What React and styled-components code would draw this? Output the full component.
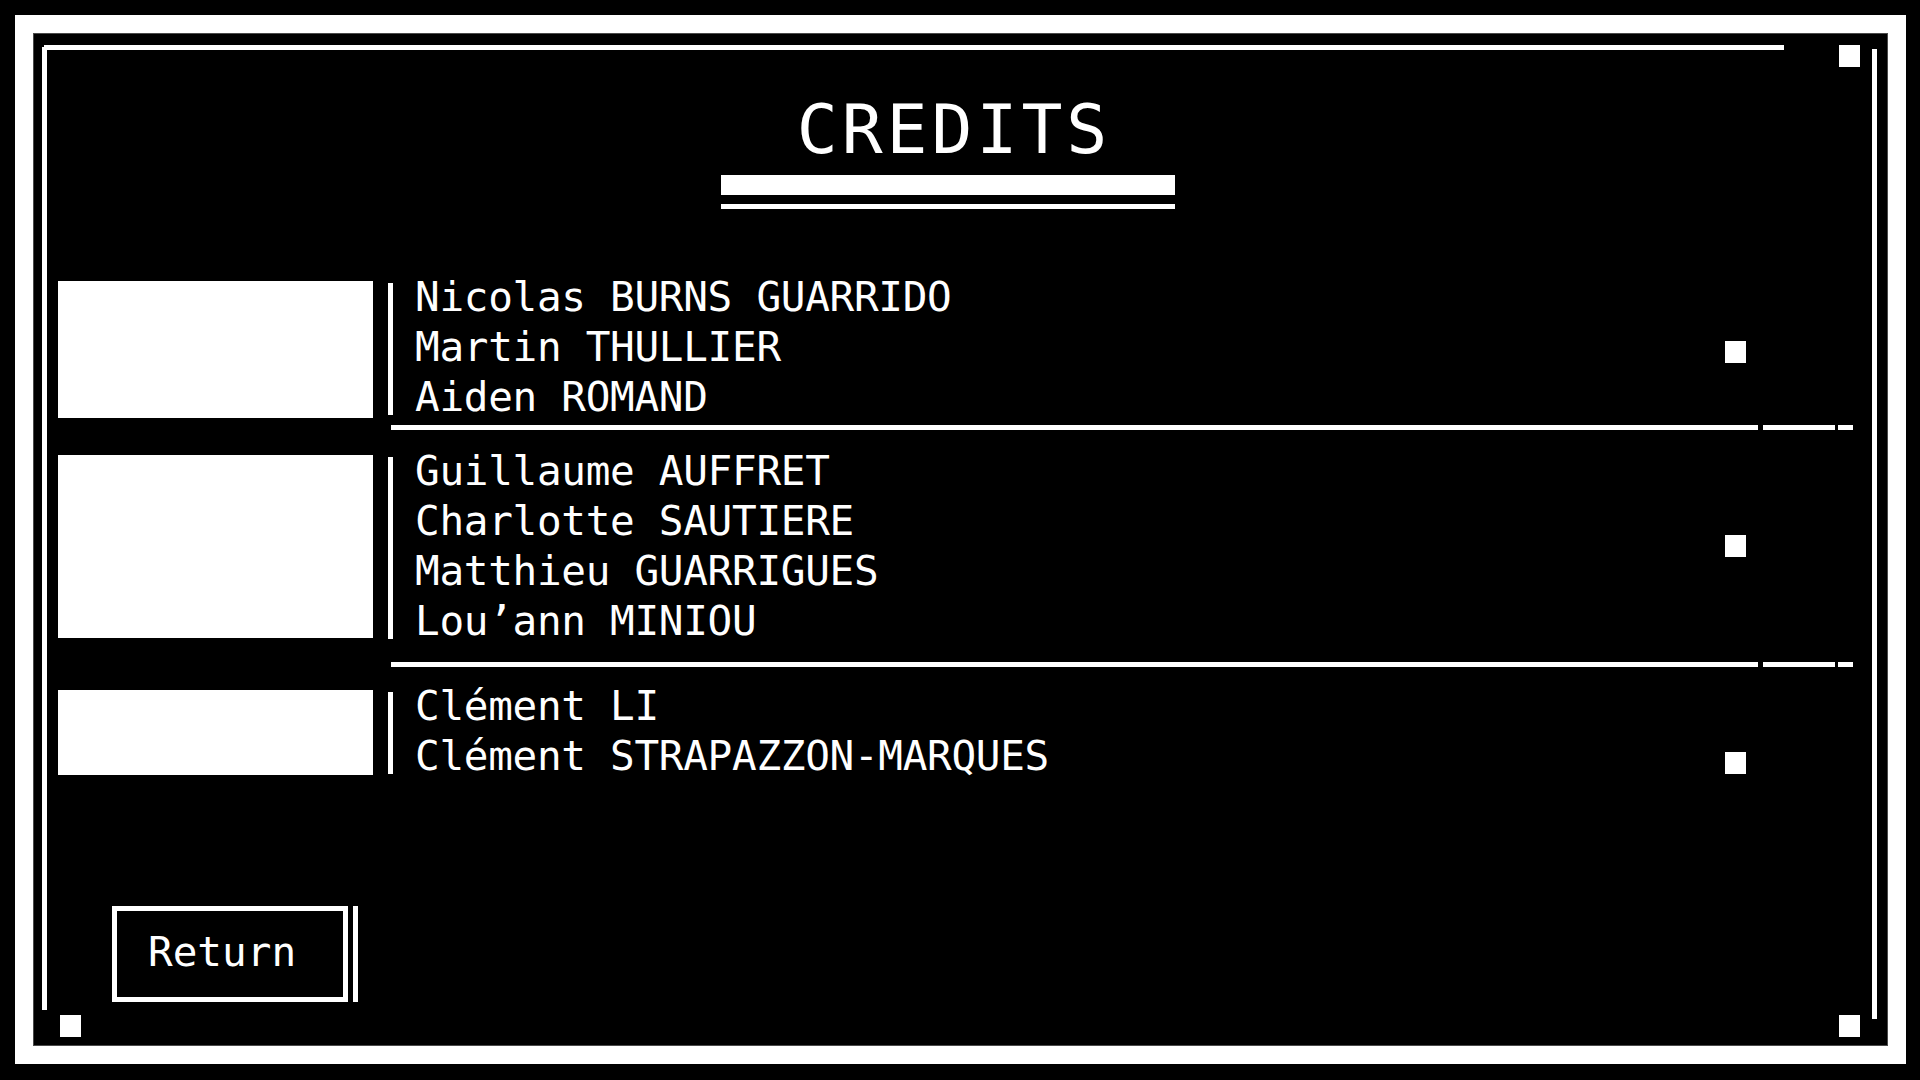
import React from "react";
import styled, { createGlobalStyle } from "styled-components";

const credits = [
  {
    block: 137,
    marker: 60,
    pad: "0 0 7px",
    names: ["Nicolas BURNS GUARRIDO", "Martin THULLIER", "Aiden ROMAND"],
  },
  {
    block: 183,
    marker: 80,
    pad: "25px 0 23px",
    names: [
      "Guillaume AUFFRET",
      "Charlotte SAUTIERE",
      "Matthieu GUARRIGUES",
      "Lou’ann MINIOU",
    ],
  },
  {
    block: 85,
    marker: 62,
    pad: "23px 0 0",
    names: ["Clément LI", "Clément STRAPAZZON-MARQUES"],
  },
];

const App = () => {
  return (
    <Page>
      <GlobalStyle />
      <Frame>
        <Screen>
          <TopLine />
          <CornerSquare $row={1} $side="end" />
          <LeftLine />
          <RightLine />

          <Content>
            <TitleBlock>
              <Title>CREDITS</Title>
              <ThickBar />
              <ThinBar />
            </TitleBlock>

            <CreditList>
              {credits.map((group, i) => (
                <React.Fragment key={i}>
                  <CreditRow $pad={group.pad}>
                    <Picture $h={group.block} />
                    <Names>
                      {group.names.map((n) => (
                        <Name key={n}>{n}</Name>
                      ))}
                    </Names>
                    <Marker $top={group.marker} />
                  </CreditRow>
                  {i < credits.length - 1 && (
                    <Divider>
                      <Segment $w={1367} />
                      <Segment $w={72} $gap={5} />
                      <Segment $w={15} $gap={3} />
                    </Divider>
                  )}
                </React.Fragment>
              ))}
            </CreditList>

            <ReturnWrap>
              <ReturnButton type="button">Return</ReturnButton>
              <ButtonRail />
            </ReturnWrap>
          </Content>

          <CornerSquare $row={3} $side="start" />
          <CornerSquare $row={3} $side="end" />
        </Screen>
      </Frame>
    </Page>
  );
};

export default App;

const GlobalStyle = createGlobalStyle`
  html, body {
    margin: 0;
    padding: 0;
    background: #000;
  }
  * {
    box-sizing: border-box;
  }
`;

// page + white frame
const Page = styled.div`
  width: 1920px;
  height: 1080px;
  padding: 15px 14px 16px 15px;
  background: #000;
  font-family: "DejaVu Sans Mono", "Liberation Mono", monospace;
  color: #fff;
`;

const Frame = styled.div`
  height: 100%;
  border: 18px solid #fff;
`;

const Screen = styled.div`
  height: 100%;
  border: 1px solid #4a4a4a;
  background: #000;
  padding: 11px 10px 8px 8px;
  display: grid;
  grid-template-columns: 5px 1fr 5px;
  grid-template-rows: 22px 1fr 22px;
`;

// frame ornaments
const TopLine = styled.div`
  grid-area: 1 / 2;
  align-self: start;
  justify-self: start;
  margin-left: -3px;
  width: 1740px;
  height: 5px;
  background: #fff;
`;

const LeftLine = styled.div`
  grid-column: 1;
  grid-row: 1 / 3;
  margin: 2px 0 5px;
  background: #fff;
`;

const RightLine = styled.div`
  grid-column: 3;
  grid-row: 1 / 4;
  margin: 4px 0 18px;
  background: #fff;
`;

const CornerSquare = styled.div`
  grid-area: ${(p) => p.$row} / 2;
  justify-self: ${(p) => p.$side};
  margin: ${(p) => (p.$side === "end" ? "0 12px 0 0" : "0 0 0 13px")};
  width: 21px;
  height: 22px;
  background: #fff;
`;

const Content = styled.main`
  grid-area: 2 / 2;
  display: flex;
  flex-direction: column;
  min-height: 0;
`;

// title
const TitleBlock = styled.div`
  width: 454px;
  margin: 29px 0 0 674px;
  display: flex;
  flex-direction: column;
`;

const Title = styled.h1`
  margin: 0;
  padding-left: 12px;
  font-size: 68px;
  line-height: 68px;
  font-weight: normal;
  letter-spacing: 4px;
  text-align: center;
`;

const ThickBar = styled.div`
  height: 20px;
  margin-top: 11px;
  background: #fff;
`;

const ThinBar = styled.div`
  height: 5px;
  margin-top: 9px;
  background: #fff;
`;

// credit rows
const CreditList = styled.section`
  margin-top: 72px;
  display: flex;
  flex-direction: column;
`;

const CreditRow = styled.div`
  display: flex;
  align-items: flex-start;
  padding: ${(p) => p.$pad};
`;

const Picture = styled.div`
  flex-shrink: 0;
  width: 315px;
  height: ${(p) => p.$h}px;
  margin-left: 11px;
  background: #fff;
`;

const Names = styled.div`
  display: flex;
  flex-direction: column;
  gap: 22px;
  margin: 2px 0 0 15px;
  padding: 0 0 4px 22px;
  border-left: 5px solid #fff;
`;

const Name = styled.div`
  font-size: 41px;
  line-height: 28px;
  letter-spacing: -0.3px;
  white-space: pre;
`;

const Marker = styled.div`
  flex-shrink: 0;
  width: 21px;
  height: 22px;
  margin: ${(p) => p.$top}px 126px 0 auto;
  background: #fff;
`;

const Divider = styled.div`
  display: flex;
  margin-left: 344px;
`;

const Segment = styled.div`
  width: ${(p) => p.$w}px;
  height: 5px;
  margin-left: ${(p) => p.$gap || 0}px;
  background: #fff;
`;

// return button
const ReturnWrap = styled.div`
  display: flex;
  gap: 5px;
  margin: 131px 0 0 65px;
`;

const ReturnButton = styled.button`
  width: 236px;
  height: 96px;
  border: 5px solid #fff;
  background: #000;
  color: #fff;
  font-family: "DejaVu Sans Mono", "Liberation Mono", monospace;
  font-size: 41px;
  text-align: left;
  padding: 0 0 5px 31px;
  cursor: pointer;
`;

const ButtonRail = styled.div`
  width: 5px;
  height: 96px;
  background: #fff;
`;
